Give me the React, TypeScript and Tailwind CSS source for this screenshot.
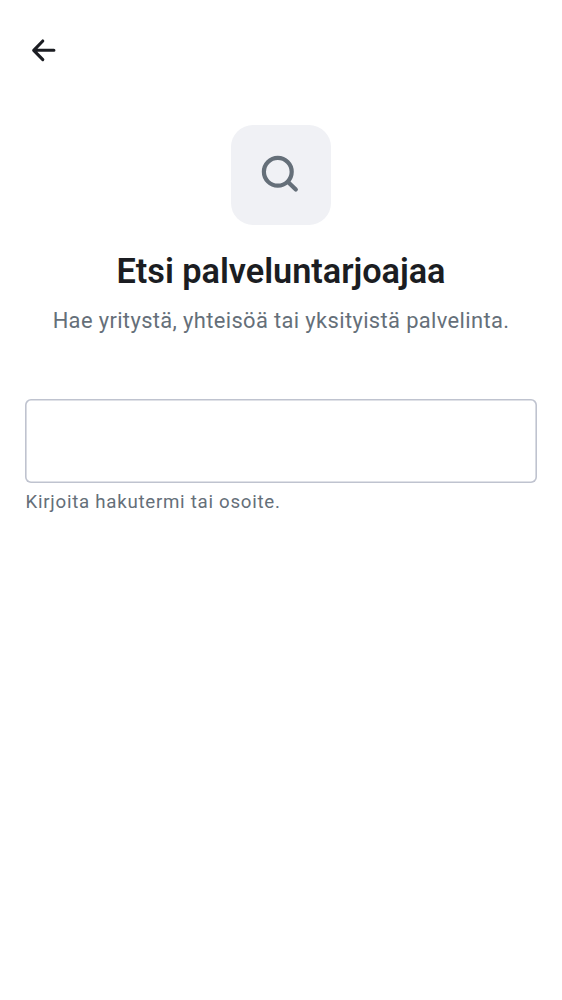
export default function App() {
  return (
    <main className="flex h-[1000px] w-full flex-col bg-white px-[25px] font-['Roboto',sans-serif] text-[#1b1d22]">
      <header className="flex h-[100px] shrink-0 items-center pl-[6px]">
        <button aria-label="Takaisin" className="size-[25px]">
          <svg viewBox="0 0 25 25" className="size-[25px]" fill="none" stroke="currentColor" strokeWidth="3.1" strokeLinecap="round" strokeLinejoin="round">
            <path d="M22.9 12.3H2.8M11.8 3L2.7 12.3L11.8 21.6" />
          </svg>
        </button>
      </header>
      <section className="mt-[25px] flex flex-col items-center">
        <div className="flex size-[100px] items-center justify-center rounded-[22px] bg-[#f0f1f5]">
          <svg viewBox="0 0 40 40" className="size-[40px]" fill="none" stroke="#656f79" strokeWidth="4.2" strokeLinecap="round">
            <circle cx="16.8" cy="16.8" r="13.9" />
            <path d="M27 27L34.8 34.6" />
          </svg>
        </div>
        <h1 className="mt-[25px] text-[34.3px] leading-[42px] font-semibold tracking-[-0.03px] whitespace-nowrap">Etsi palveluntarjoajaa</h1>
        <p className="mt-[12px] pt-px text-[21.9px] leading-[31px] tracking-[0.37px] whitespace-nowrap text-[#656f79]">Hae yritystä, yhteisöä tai yksityistä palvelinta.</p>
      </section>
      <input aria-label="Palveluntarjoaja" className="mt-[62.5px] h-[84px] w-full shrink-0 rounded-[6px] px-4 text-[22px] shadow-[inset_0_0_0_1.6px_#bfc3cf] outline-none" />
      <p className="mt-[6.5px] pl-[0.5px] text-[18.7px] leading-[26px] tracking-[0.73px] whitespace-nowrap text-[#656f79]">Kirjoita hakutermi tai osoite.</p>
    </main>
  );
}
